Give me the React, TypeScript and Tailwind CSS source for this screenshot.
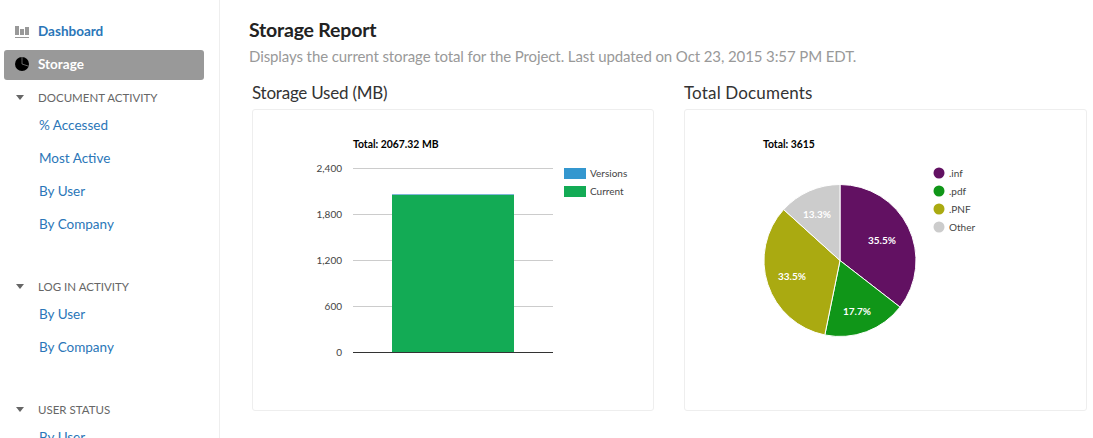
const font = "font-['Lato','Noto_Sans',sans-serif]";

const pieData = [
  { label: ".inf", pct: 35.5, color: "#621162", tx: 198, ty: 135 },
  { label: ".pdf", pct: 17.7, color: "#109618", tx: 173, ty: 206 },
  { label: ".PNF", pct: 33.5, color: "#aaaa11", tx: 108, ty: 171 },
  { label: "Other", pct: 13.3, color: "#cccccc", tx: 133, ty: 109 },
];

const cx = 156;
const cy = 151.5;
const r = 76;

// builds the pie wedges clockwise from 12 o'clock
function slices() {
  let start = 0;
  return pieData.map((s) => {
    const end = start + (s.pct / 100.0) * Math.PI * 2;
    const x1 = cx + r * Math.sin(start);
    const y1 = cy - r * Math.cos(start);
    const x2 = cx + r * Math.sin(end);
    const y2 = cy - r * Math.cos(end);
    const large = end - start > Math.PI ? 1 : 0;
    start = end;
    return { ...s, d: `M${cx} ${cy}L${x1} ${y1}A${r} ${r} 0 ${large} 1 ${x2} ${y2}Z` };
  });
}

const BarChart = () => (
  <svg width="400" height="300" className="block -mt-px -ml-px">
    <text x="101" y="39" fontSize="10.4" fontWeight="700" fill="#000">
      Total: 2067.32 MB
    </text>
    {[
      ["2,400", 59.5],
      ["1,800", 105.5],
      ["1,200", 151.5],
      ["600", 197.5],
    ].map(([label, y]) => (
      <g key={label}>
        <line x1="101" x2="301" y1={y} y2={y} stroke="#ccc" />
        <text x="90" y={Number(y) + 3.5} fontSize="10" textAnchor="end" fill="#444">
          {label}
        </text>
      </g>
    ))}
    <text x="90" y="247" fontSize="10" textAnchor="end" fill="#444">
      0
    </text>
    <rect x="140" y="85" width="122" height="1" fill="#7fb6d8" />
    <rect x="140" y="86" width="122" height="157" fill="#13ab55" />
    <line x1="101" x2="301" y1="243.5" y2="243.5" stroke="#333" />
    <rect x="312" y="59" width="22" height="11" fill="#3497cf" />
    <rect x="312" y="77" width="22" height="11" fill="#13ab55" />
    <text x="338" y="68" fontSize="10" fill="#444">
      Versions
    </text>
    <text x="338" y="86" fontSize="10" fill="#444">
      Current
    </text>
  </svg>
);

const PieChart = () => (
  <svg width="401" height="300" className="block -mt-px -ml-px">
    <text x="79" y="39" fontSize="10.4" fontWeight="700" fill="#000">
      Total: 3615
    </text>
    {slices().map((s) => (
      <path key={s.label} d={s.d} fill={s.color} stroke="#fff" strokeWidth="1" />
    ))}
    {pieData.map((s) => (
      <text key={s.label} x={s.tx} y={s.ty} fontSize="10" fontWeight="700" textAnchor="middle" fill="#fff">
        {s.pct}%
      </text>
    ))}
    {pieData.map((s, i) => (
      <g key={s.label}>
        <circle cx="255" cy={64 + i * 18} r="5.5" fill={s.color} />
        <text x="265" y={68 + i * 18} fontSize="10" fill="#444">
          {s.label}
        </text>
      </g>
    ))}
  </svg>
);

const Section = ({ title, items, className }: { title: string; items: string[]; className?: string }) => (
  <div className={className}>
    <div className="flex items-center h-[21px] pl-[16px]">
      <span className="w-0 h-0 border-x-[4px] border-x-transparent border-t-[5px] border-t-[#666]" />
      <span className="ml-[14px] text-[11.5px] text-[#666]">{title}</span>
    </div>
    {items.map((item) => (
      <div key={item} className="h-[33px] pt-[2px] pl-[39px] flex items-center text-[13.5px] text-[#2a76b8]">
        {item}
      </div>
    ))}
  </div>
);

const App = () => {
  return (
    <div className={`flex h-[438px] w-[1093px] overflow-hidden bg-white ${font}`}>
      {/* Sidebar */}
      <div className="w-[220px] shrink-0 border-r border-[#eee] pt-[16px] pl-[4px] pr-[15px]">
        <div className="h-[30px] flex items-center pl-[11px] text-[13.5px] font-bold text-[#2a76b8]">
          <svg width="14" height="14" viewBox="0 0 14 14" fill="#999" className="mt-[2px]">
            <rect x="0" y="1" width="4" height="9" />
            <rect x="5" y="4" width="4" height="6" />
            <rect x="10" y="2" width="4" height="8" />
            <rect x="0" y="12" width="14" height="1" />
          </svg>
          <span className="ml-[9px]">Dashboard</span>
        </div>
        <div className="mt-[4px] h-[30px] pb-[2px] flex items-center pl-[11px] rounded-[3px] bg-[#999] text-[13.5px] font-bold text-white">
          <svg width="14" height="14" viewBox="0 0 14 14" fill="#000">
            <circle cx="7" cy="7" r="7" />
            <path d="M7 7V0M7 7L13.6 9.2" stroke="#aaa" strokeWidth="0.6" fill="none" />
          </svg>
          <span className="ml-[9px]">Storage</span>
        </div>
        <div className="-ml-[4px]">
          <Section className="mt-[7px]" title="DOCUMENT ACTIVITY" items={["% Accessed", "Most Active", "By User", "By Company"]} />
          <Section className="mt-[36px]" title="LOG IN ACTIVITY" items={["By User", "By Company"]} />
          <Section className="mt-[36px]" title="USER STATUS" items={["By User"]} />
        </div>
      </div>

      {/* Main */}
      <div className="flex-1 pl-[29px] pt-[18px]">
        <h1 className="text-[19.5px] leading-[24px] font-bold tracking-[-0.2px] text-[#222]">Storage Report</h1>
        <p className="mt-[2px] text-[15px] leading-[24px] tracking-[-0.1px] text-[#999]">
          Displays the current storage total for the Project. Last updated on Oct 23, 2015 3:57 PM EDT.
        </p>
        <div className="flex mt-[13px] gap-[30px] ml-[3px]">
          <div className="w-[402px]">
            <h2 className="text-[17px] leading-[24px] tracking-[-0.23px] text-[#333]">Storage Used (MB)</h2>
            <div className="mt-[4px] h-[302px] border border-[#eee] rounded-[3px]">
              <BarChart />
            </div>
          </div>
          <div className="w-[403px]">
            <h2 className="text-[17px] leading-[24px] tracking-[0.16px] text-[#333]">Total Documents</h2>
            <div className="mt-[4px] h-[302px] border border-[#eee] rounded-[3px]">
              <PieChart />
            </div>
          </div>
        </div>
      </div>
    </div>
  );
};

export default App;
